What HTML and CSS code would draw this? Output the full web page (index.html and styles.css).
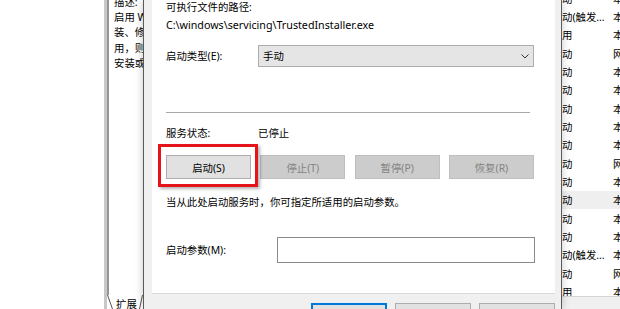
FILE: index.html
```html
<!DOCTYPE html>
<html lang="zh-CN">
<head>
  <meta charset="UTF-8" />
  <meta name="viewport" content="width=device-width, initial-scale=1.0"/>
  <title>服务属性</title>
  <link rel="stylesheet" href="styles.css">
</head>

<body>
  <div class="screen">
    <div class="blank"></div>

    <!-- 服务窗口左侧的描述栏 -->
    <div class="desc-frame">
      <div class="desc">
        <p>描述:</p>
        <p>启用 W</p>
        <p>装、修</p>
        <p>用，则</p>
        <p>安装或</p>
      </div>
      <div class="tabs">
        <svg class="slant" width="6" height="14" viewBox="0 0 6 14">
          <line x1="0.5" y1="0" x2="5.5" y2="14" stroke="#555" stroke-width="1"/>
        </svg>
        <span class="tab-text">扩展</span>
        <svg class="slant" width="4" height="14" viewBox="0 0 4 14">
          <line x1="3.5" y1="0" x2="0.5" y2="14" stroke="#555" stroke-width="1"/>
        </svg>
      </div>
    </div>

    <!-- 属性对话框 -->
    <div class="dialog">
      <div class="page">
        <div class="line">可执行文件的路径:</div>
        <div class="line path">C:\windows\servicing\TrustedInstaller.exe</div>

        <div class="field startup">
          <span class="label">启动类型(E):</span>
          <div class="select">
            <span>手动</span>
            <svg width="8" height="5" viewBox="0 0 8 5">
              <polyline points="0.5,0.5 4,4 7.5,0.5" fill="none" stroke="#333" stroke-width="1"/>
            </svg>
          </div>
        </div>

        <div class="sep"></div>

        <div class="field status">
          <span class="label">服务状态:</span>
          <span>已停止</span>
        </div>

        <div class="actions">
          <button class="btn">启动(S)</button>
          <button class="btn" disabled>停止(T)</button>
          <button class="btn" disabled>暂停(P)</button>
          <button class="btn" disabled>恢复(R)</button>
          <div class="mark"></div>
        </div>

        <div class="line hint">当从此处启动服务时，你可指定所适用的启动参数。</div>

        <div class="field params">
          <span class="label wide">启动参数(M):</span>
          <div class="input"></div>
        </div>
      </div>

      <div class="footer">
        <button class="btn ok"></button>
        <button class="btn"></button>
        <button class="btn"></button>
      </div>
    </div>

    <!-- 服务列表 -->
    <div class="list">
      <div class="rows">
        <div class="rows-inner">
          <div class="row"><span class="type">动</span><span>本地系统</span></div>
          <div class="row"><span class="type">动(触发...</span><span>本地系统</span></div>
          <div class="row"><span class="type">用</span><span>本地系统</span></div>
          <div class="row"><span class="type">动</span><span>网络服务</span></div>
          <div class="row"><span class="type">动</span><span>本地系统</span></div>
          <div class="row"><span class="type">动</span><span>本地系统</span></div>
          <div class="row"><span class="type">动</span><span>本地系统</span></div>
          <div class="row"><span class="type">动</span><span>本地系统</span></div>
          <div class="row"><span class="type">动</span><span>本地系统</span></div>
          <div class="row"><span class="type">动</span><span>网络服务</span></div>
          <div class="row"><span class="type">动</span><span>本地系统</span></div>
          <div class="row hot"><span class="type">动</span><span>本地系统</span></div>
          <div class="row"><span class="type">动</span><span>本地系统</span></div>
          <div class="row"><span class="type">动</span><span>本地系统</span></div>
          <div class="row"><span class="type">动(触发...</span><span>本地系统</span></div>
          <div class="row"><span class="type">动</span><span>网络服务</span></div>
          <div class="row"><span class="type">用</span><span>本地系统</span></div>
        </div>
      </div>
      <div class="status-bar"></div>
    </div>
  </div>
</body>
</html>
```

FILE: styles.css
```css
* {
  box-sizing: border-box;
}

body {
  margin: 0;
  font-family: "Noto Sans", "Noto Sans CJK SC", sans-serif;
  font-size: 10.4px;
  color: #000;
  background: #fff;
  overflow: hidden;
}

.screen {
  display: flex;
  width: 620px;
  height: 309px;
  overflow: hidden;
}

.blank {
  width: 104px;
  flex: none;
}

/* 左侧描述栏 */
.desc-frame {
  width: 39px;
  flex: none;
  display: flex;
  flex-direction: column;
  border-left: 3px solid #c8c8c8;
}

.desc {
  height: 295px;
  padding-left: 5px;
  border-left: 2px solid #969696;
  overflow: hidden;
  white-space: nowrap;
}

.desc p {
  margin: 0;
  line-height: 15.2px;
}

.desc p:first-child {
  margin-top: -5px;
}

.tabs {
  display: flex;
  align-items: flex-start;
  height: 14px;
  white-space: nowrap;
  overflow: hidden;
}

.slant {
  flex: none;
}

.tab-text {
  flex: none;
  margin: 2px 2px 0 3px;
  line-height: 14px;
}

/* 对话框 */
.dialog {
  width: 419px;
  flex: none;
  padding: 0 6px 0 8px;
  background: #f0f0f0;
  border-left: 1px solid #5a5a5a;
  border-right: 1px solid #5a5a5a;
  box-shadow: 0 0 8px rgba(0,0,0,0.22);
  position: relative;
  z-index: 1;
}

.page {
  height: 294px;
  padding-left: 14px;
  background: #fff;
  border-bottom: 1px solid #dadada;
}

.line {
  line-height: 14px;
  white-space: nowrap;
}

.path {
  margin-top: 4px;
  font-size: 10.7px;
}

.field {
  display: flex;
  align-items: center;
  line-height: 14px;
}

.label {
  width: 92px;
  flex: none;
}

.label.wide {
  width: 111px;
}

.startup {
  margin-top: 13px;
  height: 22px;
}

.select {
  width: 276px;
  height: 22px;
  display: flex;
  align-items: center;
  justify-content: space-between;
  padding: 0 4px 0 4px;
  background: #e5e5e5;
  border: 1px solid #adadad;
}

.sep {
  width: 364px;
  height: 1px;
  margin-top: 45px;
  background: #a8a8a8;
}

.status {
  margin-top: 13px;
}

.actions {
  position: relative;
  display: flex;
  justify-content: space-between;
  width: 368px;
  margin-top: 15px;
}

.btn {
  width: 85px;
  height: 24px;
  padding: 0;
  font: inherit;
  color: #000;
  background: #e1e1e1;
  border: 1px solid #adadad;
}

.btn:disabled {
  color: #838383;
  background: #cccccc;
  border-color: #bfbfbf;
}

/* 红色标注框 */
.mark {
  position: absolute;
  left: -8px;
  top: -11px;
  width: 100px;
  height: 43px;
  border: 3px solid #e5141c;
  box-shadow: 2px 2px 3px rgba(0,0,0,0.3);
}

.hint {
  margin-top: 16px;
}

.params {
  margin-top: 28px;
  height: 26px;
}

.input {
  width: 258px;
  height: 26px;
  background: #fff;
  border: 1px solid #8a8a8a;
}

.footer {
  display: flex;
  justify-content: flex-end;
  gap: 8px;
  padding-top: 9px;
}

.footer .btn {
  width: 76px;
  height: 23px;
}

.footer .ok {
  border-color: #0078d7;
  box-shadow: inset 0 0 0 1px #0078d7;
}

/* 服务列表 */
.list {
  flex: 1;
  min-width: 0;
  display: flex;
  flex-direction: column;
}

.rows {
  height: 296px;
  overflow: hidden;
}

.rows-inner {
  margin-top: -11px;
}

.row {
  display: flex;
  align-items: center;
  height: 18.33px;
  white-space: nowrap;
}

.row .type {
  width: 51px;
  flex: none;
}

.row.hot {
  background: #efefef;
}

.status-bar {
  flex: 1;
  background: #f0f0f0;
  border-top: 1px solid #d4d4d4;
}
```
